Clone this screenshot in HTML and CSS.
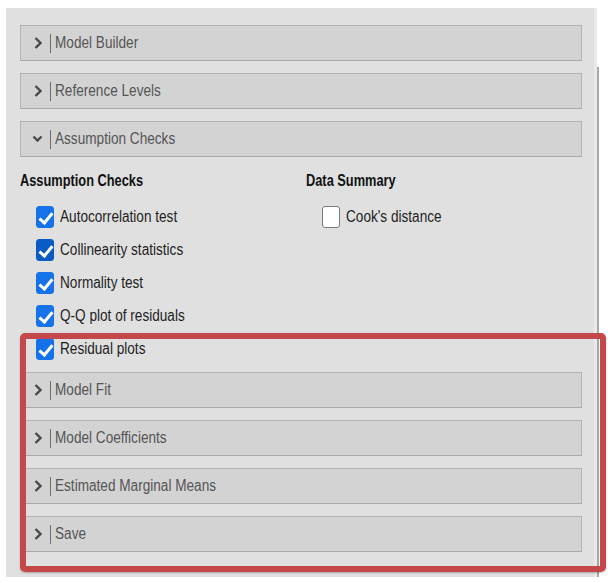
FILE: index.html
```html
<!DOCTYPE html>
<html lang="en">
<head>
    <meta charset="UTF-8">
    <title>Linear Regression options</title>
    <link rel="stylesheet" href="styles.css">
</head>
<body>
    <div class="panel">
        <div class="section">
            <svg class="chev" width="8" height="12" viewBox="0 0 8 12"><polyline points="1.5,1 6.5,6 1.5,11"/></svg>
            <span class="sep"></span>
            <span class="title">Model Builder</span>
        </div>
        <div class="section">
            <svg class="chev" width="8" height="12" viewBox="0 0 8 12"><polyline points="1.5,1 6.5,6 1.5,11"/></svg>
            <span class="sep"></span>
            <span class="title">Reference Levels</span>
        </div>
        <div class="section open">
            <svg class="chev down" width="11" height="8" viewBox="0 0 11 8"><polyline points="1.5,1.5 5.5,5.5 9.5,1.5"/></svg>
            <span class="sep"></span>
            <span class="title">Assumption Checks</span>
        </div>

        <div class="options">
            <div class="group">
                <div class="group-title"><span class="text">Assumption Checks</span></div>
                <label class="check"><span class="box on"></span><span class="text">Autocorrelation test</span></label>
                <label class="check"><span class="box on focus"></span><span class="text">Collinearity statistics</span></label>
                <label class="check"><span class="box on"></span><span class="text">Normality test</span></label>
                <label class="check"><span class="box on"></span><span class="text">Q-Q plot of residuals</span></label>
                <label class="check"><span class="box on"></span><span class="text">Residual plots</span></label>
            </div>
            <div class="group">
                <div class="group-title"><span class="text">Data Summary</span></div>
                <label class="check"><span class="box"></span><span class="text">Cook's distance</span></label>
            </div>
        </div>

        <div class="section">
            <svg class="chev" width="8" height="12" viewBox="0 0 8 12"><polyline points="1.5,1 6.5,6 1.5,11"/></svg>
            <span class="sep"></span>
            <span class="title">Model Fit</span>
        </div>
        <div class="section">
            <svg class="chev" width="8" height="12" viewBox="0 0 8 12"><polyline points="1.5,1 6.5,6 1.5,11"/></svg>
            <span class="sep"></span>
            <span class="title">Model Coefficients</span>
        </div>
        <div class="section">
            <svg class="chev" width="8" height="12" viewBox="0 0 8 12"><polyline points="1.5,1 6.5,6 1.5,11"/></svg>
            <span class="sep"></span>
            <span class="title">Estimated Marginal Means</span>
        </div>
        <div class="section">
            <svg class="chev" width="8" height="12" viewBox="0 0 8 12"><polyline points="1.5,1 6.5,6 1.5,11"/></svg>
            <span class="sep"></span>
            <span class="title">Save</span>
        </div>
    </div>

    <div class="highlight"></div>
</body>
</html>
```

FILE: styles.css
```css
body {
    margin: 0;
    background: #ffffff;
    font-family: "Liberation Sans", Arial, sans-serif;
    position: relative;
}

/* the original UI uses a narrow face, squeeze the text to match */
.title,
.text {
    display: inline-block;
    white-space: nowrap;
    transform: scaleX(0.85);
    transform-origin: 0 50%;
}

.panel {
    position: relative;
    margin: 8px 0 0 6px;
    width: 591px;
    padding: 17px 12px 13px 14px;
    box-sizing: border-box;
    background: #e0e0e0;
    border-right: 3px solid #e9e9e9;
}
/* scrollbar thumb on the right edge */
.panel::after {
    content: "";
    position: absolute;
    right: -5px;
    top: 59px;
    bottom: 0;
    width: 2px;
    background: #a8a8a8;
}

.section {
    display: flex;
    align-items: center;
    height: 36px;
    box-sizing: border-box;
    margin-bottom: 12px;
    padding-left: 13px;
    background: #d3d3d3;
    border: 1px solid #b4b4b4;
    border-bottom-color: #a9a9a9;
    color: #555555;
    font-size: 16px;
}
.section.open {
    margin-bottom: 0;
}
.chev polyline {
    fill: none;
    stroke: #4a4a4a;
    stroke-width: 2.4;
}
.chev.down {
    margin-left: -2px;
}
.sep {
    width: 1px;
    height: 19px;
    background: #6e6e6e;
    margin: 0 4px 0 8px;
}
.chev.down + .sep {
    margin-left: 7px;
}

.options {
    display: grid;
    grid-template-columns: 286px 1fr;
    padding: 14px 0 7px 0;
}
.group-title {
    font-weight: bold;
    font-size: 16px;
    line-height: 20px;
    color: #111111;
    margin-bottom: 9px;
}
.group-title .text {
    transform: scaleX(0.8);
}
.check {
    display: flex;
    align-items: center;
    height: 33px;
    padding-left: 16px;
    font-size: 16px;
    color: #1e1e1e;
}
.box {
    flex: none;
    width: 18px;
    height: 22px;
    box-sizing: border-box;
    margin-right: 6px;
    border-radius: 3px;
    background: #ffffff;
    border: 1px solid #7a7a7a;
    position: relative;
}
.box.on {
    background: #1672ea;
    border-color: #1672ea;
}
.box.on.focus {
    background: #0b5bc5;
    border-color: #0b5bc5;
}
.box.on::after {
    content: "";
    position: absolute;
    left: 5px;
    top: 3px;
    width: 5px;
    height: 11px;
    border: solid #ffffff;
    border-width: 0 3px 3px 0;
    transform: rotate(40deg);
}

.highlight {
    position: absolute;
    left: 20px;
    top: 333px;
    width: 586px;
    height: 239px;
    box-sizing: border-box;
    border: 6px solid #c4484a;
    border-radius: 5px;
    box-shadow: 0 1px 2px rgba(0, 0, 0, 0.25);
}
```
